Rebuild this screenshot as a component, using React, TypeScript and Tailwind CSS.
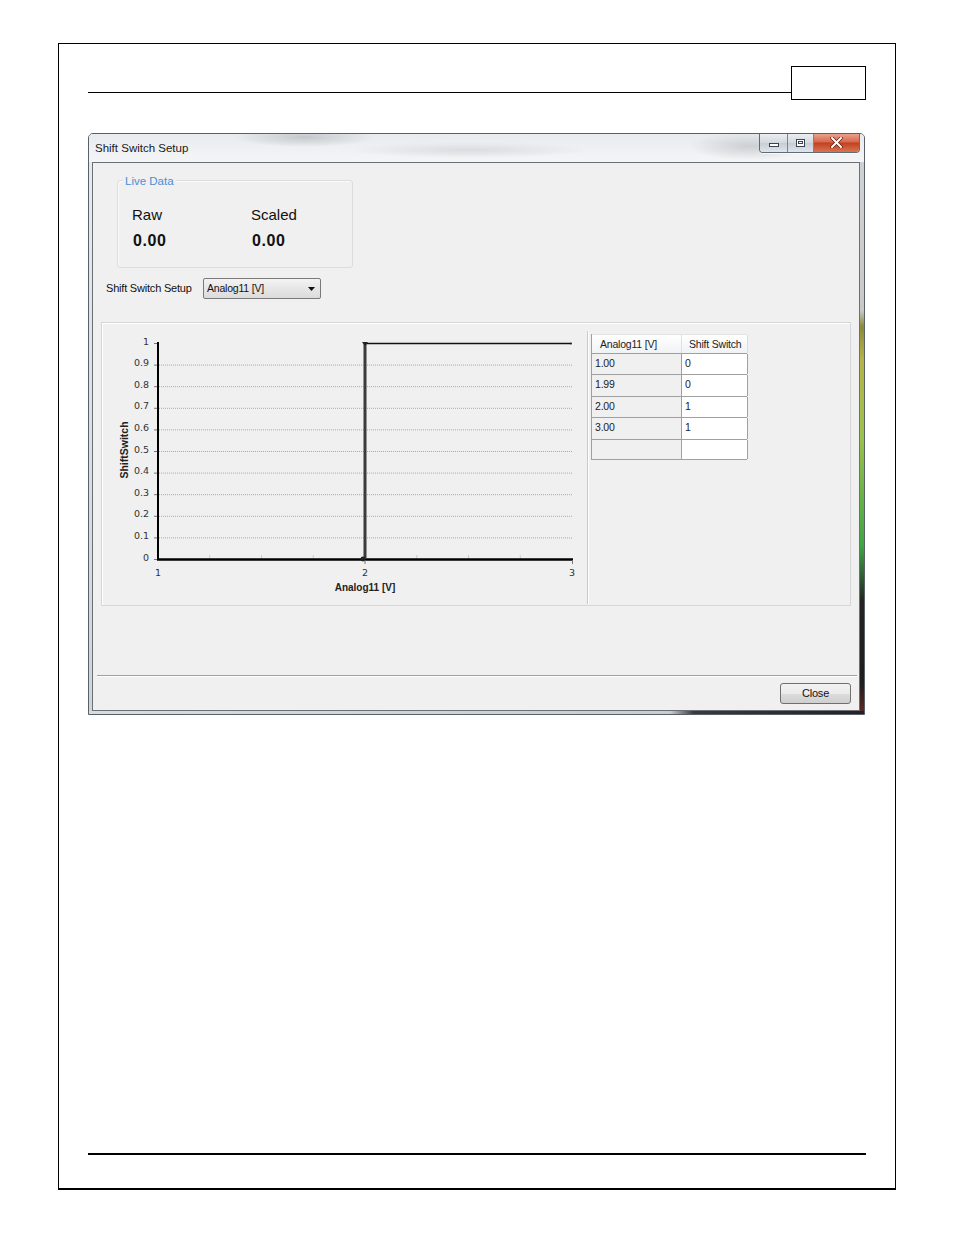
import React from "react";

const yTicks = [1, 0.9, 0.8, 0.7, 0.6, 0.5, 0.4, 0.3, 0.2, 0.1, 0];
const rows = [
  ["1.00", "0"],
  ["1.99", "0"],
  ["2.00", "1"],
  ["3.00", "1"],
  ["", ""],
];

const vy = (v: number) => 236 - 216 * v;
const vx = (x: number) => 56 + 207 * (x - 1);

function StepChart() {
  const minor = [1.25, 1.5, 1.75, 2.25, 2.5, 2.75];
  return (
    <svg width="485" height="282" viewBox="0 0 485 282" className="block">
      {/* dotted grid */}
      {yTicks
        .filter((v) => v > 0 && v < 1)
        .map((v) => (
          <line
            key={v}
            x1={57}
            x2={470}
            y1={vy(v) + 0.5}
            y2={vy(v) + 0.5}
            stroke="#a9a9a9"
            strokeWidth={1}
            strokeDasharray="1 1"
          />
        ))}

      {/* y labels + ticks */}
      {yTicks.map((v) => (
        <g key={`t${v}`}>
          <line x1={52} x2={56} y1={vy(v) + 0.5} y2={vy(v) + 0.5} stroke="#777" strokeWidth={1} />
          <text
            x={47}
            y={vy(v) + 1.5}
            textAnchor="end"
            fontSize="9.5"
            fill="#333"
            fontFamily="'DejaVu Sans', Verdana, sans-serif"
          >
            {v}
          </text>
        </g>
      ))}

      {/* x minor ticks */}
      {minor.map((x) => (
        <line key={x} x1={vx(x)} x2={vx(x)} y1={232} y2={236} stroke="#cccccc" strokeWidth={1} />
      ))}

      {/* axes */}
      <line x1={56} x2={56} y1={19} y2={237} stroke="#000" strokeWidth={2} />
      <line x1={55} x2={471} y1={236.5} y2={236.5} stroke="#000" strokeWidth={2.5} />
      <line x1={vx(2)} x2={vx(2)} y1={237} y2={241} stroke="#777" strokeWidth={1} />
      <line x1={470.5} x2={470.5} y1={237} y2={241} stroke="#777" strokeWidth={1} />

      {/* x labels */}
      {[1, 2, 3].map((x) => (
        <text
          key={x}
          x={vx(x)}
          y={253}
          textAnchor="middle"
          fontSize="9.5"
          fill="#333"
          fontFamily="'DejaVu Sans', Verdana, sans-serif"
        >
          {x}
        </text>
      ))}

      {/* series */}
      <line x1={vx(2)} x2={vx(2)} y1={vy(1)} y2={vy(0)} stroke="#3b3b3b" strokeWidth={3} />
      <line x1={vx(2)} x2={vx(3) - 1} y1={vy(1) + 0.5} y2={vy(1) + 0.5} stroke="#111" strokeWidth={1.3} />
      <polygon points={`${vx(2) - 3},${vy(1) - 1} ${vx(2) + 3},${vy(1) - 1} ${vx(2)},${vy(1) + 3}`} fill="#222" />
      <circle cx={vx(1.99)} cy={vy(0)} r={2.4} fill="#222" />
      <circle cx={vx(3) - 1} cy={vy(1) + 0.5} r={1} fill="#222" />

      {/* axis titles */}
      <text
        x={263}
        y={268}
        textAnchor="middle"
        fontSize="10"
        fontWeight="bold"
        fill="#222"
        fontFamily="'Liberation Sans', Arial, sans-serif"
      >
        Analog11 [V]
      </text>
      <text
        transform="translate(26 127) rotate(-90)"
        textAnchor="middle"
        fontSize="10.5"
        fontWeight="bold"
        fill="#222"
        fontFamily="'Liberation Sans', Arial, sans-serif"
      >
        ShiftSwitch
      </text>
    </svg>
  );
}

function TitleButtons() {
  return (
    <div className="flex h-[20px] -mt-[1px] mr-[4px] rounded-b-[4px] border border-t-0 border-[#5f6b78] overflow-hidden shadow-[0_1px_0_rgba(255,255,255,0.7)]">
      <div className="w-[28px] flex items-center justify-center border-r border-[#7b8591] bg-[linear-gradient(#eef1f4,#d3d9df_50%,#c5ccd4_51%,#dfe4e9)]">
        <div className="w-[10px] h-[4px] mt-[5px] border border-[#3a4450] bg-white" />
      </div>
      <div className="w-[26px] flex items-center justify-center border-r border-[#7b8591] bg-[linear-gradient(#eef1f4,#d3d9df_50%,#c5ccd4_51%,#dfe4e9)]">
        <div className="w-[9px] h-[8px] border border-[#3a4450] bg-white flex items-center justify-center">
          <div className="w-[5px] h-[3px] border border-[#3a4450]" />
        </div>
      </div>
      <div className="w-[45px] flex items-center justify-center bg-[linear-gradient(#e9a994,#d8664a_48%,#c2401f_52%,#d8754f)]">
        <svg width="13" height="11" viewBox="0 0 13 11">
          <path d="M2 1 L11 10 M11 1 L2 10" stroke="#5a1a10" strokeWidth="3.4" strokeLinecap="round" />
          <path d="M2 1 L11 10 M11 1 L2 10" stroke="#ffffff" strokeWidth="2" strokeLinecap="round" />
        </svg>
      </div>
    </div>
  );
}

function ShiftSwitchWindow() {
  return (
    <div className="w-[777px] h-[582px] mt-[33px] flex flex-col border border-[#58606a] rounded-t-[5px] bg-[#dfe3e7] overflow-hidden">
      {/* title bar */}
      <div className="h-[28px] flex items-start justify-between bg-[radial-gradient(ellipse_70px_10px_at_215px_3px,#c4c8cc,transparent),radial-gradient(ellipse_120px_8px_at_380px_16px,#dadcdf,transparent),radial-gradient(ellipse_60px_14px_at_660px_12px,#cdd0d3,transparent),linear-gradient(#e8ebee,#f4f5f6)]">
        <span className="pl-[6px] pt-[7px] text-[11.5px] leading-[14px] text-[#1a1a1a]">
          Shift Switch Setup
        </span>
        <TitleButtons />
      </div>

      {/* frame + client */}
      <div className="flex-1 flex min-h-0">
        <div className="w-[3px] bg-[linear-gradient(#e7eaed,#cfd4d8)]" />
        <div className="flex-1 flex flex-col border border-[#6c6f73] bg-[#f0f0f0]">
          {/* Live Data group */}
          <div className="relative ml-[24px] mt-[17px] w-[236px] h-[88px] border border-[#dcdcdc] rounded-[3px] shadow-[inset_1px_1px_0_#fafafa]">
            <span className="absolute -top-[7px] left-[5px] px-[2px] bg-[#f0f0f0] text-[11.5px] leading-[14px] text-[#4a8fd6]">
              Live Data
            </span>
            <div className="grid grid-cols-[119px_1fr] pl-[14px] pt-[25px] text-[#111]">
              <span className="text-[15px] leading-[18px]">Raw</span>
              <span className="text-[15px] leading-[18px]">Scaled</span>
              <span className="pt-[7px] pl-[1px] text-[16px] leading-[19px] font-bold tracking-[0.6px]">0.00</span>
              <span className="pt-[7px] pl-[1px] text-[16px] leading-[19px] font-bold tracking-[0.6px]">0.00</span>
            </div>
          </div>

          {/* selector row */}
          <div className="flex items-center h-[21px] mt-[10px] ml-[13px]">
            <span className="w-[97px] text-[11px] tracking-[-0.2px] text-[#111]">Shift Switch Setup</span>
            <div className="w-[118px] h-[21px] flex items-center justify-between border border-[#7a7a7a] rounded-[2px] bg-[linear-gradient(#f4f4f4,#e6e6e6_50%,#dcdcdc)] pl-[3px] pr-[5px]">
              <span className="text-[10.5px] tracking-[-0.2px] text-[#111]">Analog11 [V]</span>
              <svg width="7" height="4" viewBox="0 0 7 4">
                <path d="M0 0 H7 L3.5 4 Z" fill="#111" />
              </svg>
            </div>
          </div>

          {/* chart + table panel */}
          <div className="mx-[8px] mt-[23px] h-[284px] flex border border-[#d6d6d6] shadow-[inset_1px_1px_0_#ffffff]">
            <div className="w-[485px] shrink-0">
              <StepChart />
            </div>
            <div className="flex-1 mt-[8px] mb-[1px] border-l border-[#c9c9c9] shadow-[inset_1px_0_0_#ffffff] pl-[3px] pt-[3px]">
              <div className="w-[156px] border-l border-[#a0a0a0] text-[10.5px] tracking-[-0.2px] text-[#222]">
                <div className="grid grid-cols-[90px_66px] h-[19px] bg-[linear-gradient(#ffffff,#f1f2f4)] border-t border-[#e2e2e2]">
                  <span className="pl-[8px] leading-[18px] border-r border-[#e0e0e0]">Analog11 [V]</span>
                  <span className="pl-[7px] leading-[18px] border-r border-[#dcdcdc]">Shift Switch</span>
                </div>
                {rows.map((r, i) => (
                  <div key={i} className="grid grid-cols-[90px_66px] h-[21.4px] border-t border-[#a0a0a0] last:border-b">
                    <span className="pl-[3px] leading-[19px] bg-[#f0f0f0] border-r border-[#a0a0a0]">{r[0]}</span>
                    <span className="pl-[3px] leading-[19px] bg-white border-r border-[#a0a0a0]">{r[1]}</span>
                  </div>
                ))}
              </div>
            </div>
          </div>

          {/* separator + button */}
          <div className="ml-[4px] mr-[2px] mt-[69px] border-t border-[#a0a0a0] shadow-[0_1px_0_#ffffff]" />
          <div className="flex justify-end mt-[7px] mr-[8px]">
            <button className="w-[71px] h-[21px] border border-[#707070] rounded-[3px] bg-[linear-gradient(#f2f2f2,#ebebeb_50%,#dddddd_51%,#cfcfcf)] text-[11px] tracking-[-0.2px] text-[#111]">
              Close
            </button>
          </div>
        </div>
        <div className="w-[4px] bg-[linear-gradient(#cfd2d5_0%,#c9c9c9_27%,#8b8a3c_30%,#b6b44a_36%,#9cc24e_50%,#3fa544_70%,#232323_80%,#1e1e1e_95%,#5a2a22_100%)]" />
      </div>
      <div className="h-[3px] bg-[linear-gradient(90deg,#d9dcdf_0%,#c9ccd0_75%,#3a3a3a_78%,#222_100%)]" />
    </div>
  );
}

export default function App() {
  return (
    <div className="w-[954px] h-[1235px] bg-white pt-[43px] pl-[58px] font-['Liberation_Sans',Arial,sans-serif]">
      <div className="w-[838px] h-[1147px] flex flex-col border border-black border-b-2 px-[29px]">
        {/* page header */}
        <div className="flex items-start mt-[22px]">
          <div className="flex-1 h-[27px] border-b border-black" />
          <div className="w-[75px] h-[34px] border border-black" />
        </div>

        <ShiftSwitchWindow />

        <div className="flex-1" />
        {/* page footer rule */}
        <div className="h-[2px] bg-black mb-[33px]" />
      </div>
    </div>
  );
}
